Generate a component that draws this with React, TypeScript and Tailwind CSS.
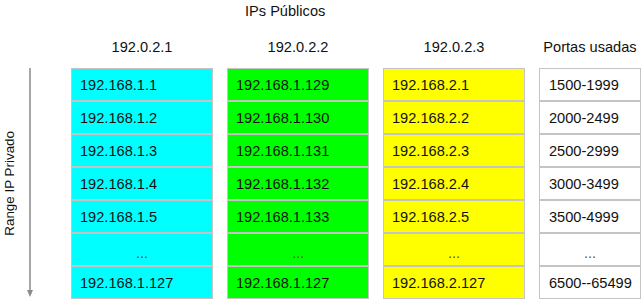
import React from "react";

type Col = { header: string; bg: string; width: string; rows: string[] };

const cols: Col[] = [
  {
    header: "192.0.2.1",
    bg: "bg-[#00ffff]",
    width: "w-[142px]",
    rows: ["192.168.1.1", "192.168.1.2", "192.168.1.3", "192.168.1.4", "192.168.1.5", "...", "192.168.1.127"],
  },
  {
    header: "192.0.2.2",
    bg: "bg-[#00ff00]",
    width: "w-[142px]",
    rows: ["192.168.1.129", "192.168.1.130", "192.168.1.131", "192.168.1.132", "192.168.1.133", "...", "192.168.1.127"],
  },
  {
    header: "192.0.2.3",
    bg: "bg-[#ffff00]",
    width: "w-[142px]",
    rows: ["192.168.2.1", "192.168.2.2", "192.168.2.3", "192.168.2.4", "192.168.2.5", "...", "192.168.2.127"],
  },
  {
    header: "Portas usadas",
    bg: "bg-white",
    width: "w-[102px]",
    rows: ["1500-1999", "2000-2499", "2500-2999", "3000-3499", "3500-4999", "...", "6500--65499"],
  },
];

export default function App() {
  return (
    <div
      className="w-[643px] h-[302px] bg-white text-[#111] overflow-hidden"
      style={{ fontFamily: '"Liberation Sans", Arial, sans-serif' }}
    >
      <div className="h-[22px] pl-[245px] pt-[3px] text-[14.6px] leading-[16px]">IPs Públicos</div>
      <div className="flex">
        <div className="w-[71px] pt-[46px] flex">
          <div className="h-[231px] w-[20px] flex items-center justify-center">
            <span className="[writing-mode:vertical-rl] rotate-180 text-[13.4px] leading-[16px] whitespace-nowrap">
              Range IP Privado
            </span>
          </div>
          <div className="h-[231px] pl-[6px]">
            <svg width="8" height="231" viewBox="0 0 8 231">
              <line x1="4" y1="0" x2="4" y2="224" stroke="#8a8a8a" strokeWidth="1.5" />
              <polygon points="1,222 7,222 4,229" fill="#8a8a8a" />
            </svg>
          </div>
        </div>
        <div className="flex gap-[14px]">
          {cols.map((c) => (
            <div key={c.header} className={`${c.width} flex flex-col`}>
              <div className="h-[46px] flex items-end justify-center pb-[13px] text-[14.6px] leading-[16px] whitespace-nowrap">
                {c.header}
              </div>
              <div className={`${c.bg} border border-[#c4c4c4] flex flex-col`}>
                {c.rows.map((r, i) => (
                  <div
                    key={i}
                    className={`flex items-center text-[14.6px] leading-[16px] ${
                      i > 0 ? "h-[33px] border-t-2 border-[#c4c4c4]" : "h-[31px]"
                    } ${r === "..." ? "justify-center text-[#555] pt-[6px]" : c.bg === "bg-white" ? "pl-[9px]" : "pl-[8px]"}`}
                  >
                    {r}
                  </div>
                ))}
              </div>
            </div>
          ))}
        </div>
      </div>
    </div>
  );
}
